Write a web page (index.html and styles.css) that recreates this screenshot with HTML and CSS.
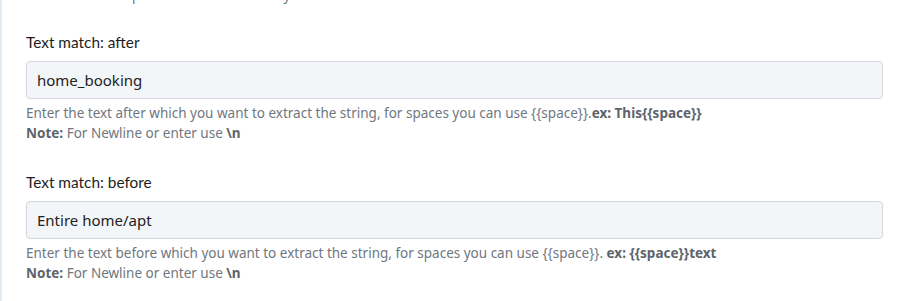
FILE: index.html
```html
<!DOCTYPE html>
<html>
<head>
<meta charset="utf-8">
<link rel="stylesheet" href="styles.css">
</head>
<body>
<div class="panel">
  <p class="help prev">Enter the text to pick the value from entry</p>
  <div class="field">
    <label class="label">Text match: after</label>
    <div class="input">home_booking</div>
    <p class="help">Enter the text after which you want to extract the string, for spaces you can use {{space}}.<b>ex: This{{space}}</b></p>
    <p class="help"><b>Note:</b> For Newline or enter use <b>\n</b></p>
  </div>
  <div class="field">
    <label class="label">Text match: before</label>
    <div class="input">Entire home/apt</div>
    <p class="help">Enter the text before which you want to extract the string, for spaces you can use {{space}}. <b>ex: {{space}}text</b></p>
    <p class="help"><b>Note:</b> For Newline or enter use <b>\n</b></p>
  </div>
</div>
</body>
</html>
```
FILE: styles.css
```css
html, body {
  margin: 0;
  padding: 0;
  background: #fff;
}
.panel {
  width: 901px;
  height: 301px;
  overflow: hidden;
  box-sizing: border-box;
  border-left: 2px solid #e3ecf3;
  padding: 0 18px 0 24px;
}
.help {
  margin: 0;
  font-family: "Noto Sans", sans-serif;
  font-size: 13.5px;
  line-height: 20px;
  color: #6f777f;
  white-space: nowrap;
}
.help b {
  color: #5c646c;
  font-weight: 700;
}
.prev {
  margin-top: -15px;
}
.field {
  padding-top: 27px;
  padding-bottom: 4px;
}
.field + .field {
  padding-top: 25px;
}
.label {
  display: block;
  font-family: "Lato", sans-serif;
  font-size: 15.4px;
  line-height: 20px;
  color: #1e1e1e;
  margin-bottom: 9px;
}
.input {
  height: 38px;
  box-sizing: border-box;
  border: 1px solid #d3d6da;
  border-radius: 4px;
  background: #f3f6f9;
  padding: 0 10px;
  font-family: "Noto Sans", sans-serif;
  font-size: 15px;
  line-height: 36px;
  color: #222;
  margin-bottom: 4px;
}
```
